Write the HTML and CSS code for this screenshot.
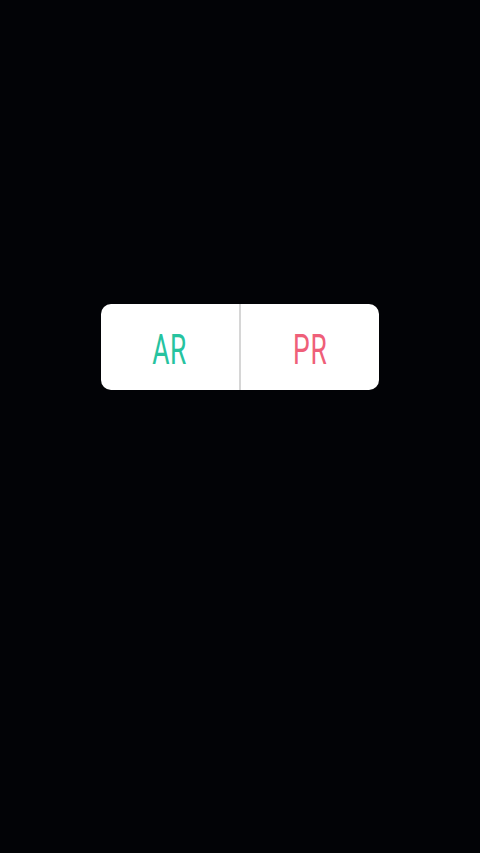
FILE: index.html
```html
<!DOCTYPE html>
<html>
<head>
<meta charset="utf-8">
<link rel="stylesheet" href="styles.css">
</head>
<body>
<div class="screen">
  <div class="poll">
    <div class="option option-ar"><span class="label">AR</span></div>
    <div class="divider"></div>
    <div class="option option-pr"><span class="label">PR</span></div>
  </div>
</div>
</body>
</html>
```
FILE: styles.css
```css
html, body {
  margin: 0;
  padding: 0;
  background: #020306;
}
.screen {
  width: 480px;
  height: 853px;
  display: flex;
  justify-content: center;
  align-items: flex-start;
  padding-top: 304px;
  box-sizing: border-box;
}
.poll {
  width: 278px;
  height: 86px;
  background: #ffffff;
  border-radius: 10px;
  display: flex;
  overflow: hidden;
}
.option {
  flex: 1;
  display: flex;
  align-items: center;
  justify-content: center;
  padding-top: 5px;
}
.divider {
  width: 2px;
  background: #d6d6d6;
}
.label {
  font-family: Roboto, "Liberation Sans", sans-serif;
  font-weight: 400;
  font-size: 42px;
  line-height: 1;
  display: inline-block;
  transform: scaleX(0.63);
  letter-spacing: 1px;
}
.option-ar .label { color: #26c39f; }
.option-pr .label { color: #ef5f79; }
```
